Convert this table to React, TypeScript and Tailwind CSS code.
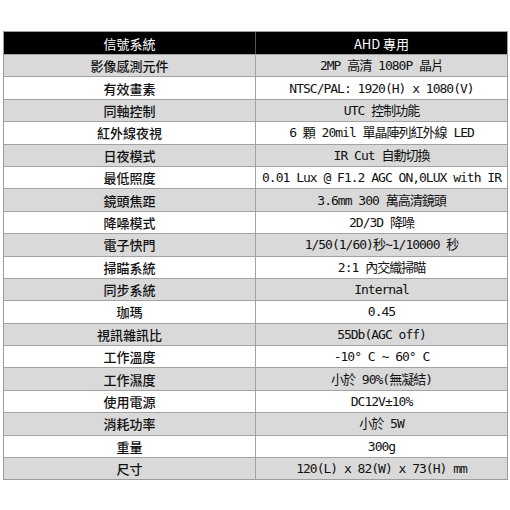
const specs: [string, string][] = [
  ["影像感測元件", "2MP 高清 1080P 晶片"],
  ["有效畫素", "NTSC/PAL: 1920(H) x 1080(V)"],
  ["同軸控制", "UTC 控制功能"],
  ["紅外線夜視", "6 顆 20mil 單晶陣列紅外線 LED"],
  ["日夜模式", "IR Cut 自動切換"],
  ["最低照度", "0.01 Lux @ F1.2 AGC ON,0LUX with IR"],
  ["鏡頭焦距", "3.6mm 300 萬高清鏡頭"],
  ["降噪模式", "2D/3D 降噪"],
  ["電子快門", "1/50(1/60)秒~1/10000 秒"],
  ["掃瞄系統", "2:1 內交織掃瞄"],
  ["同步系統", "Internal"],
  ["珈瑪", "0.45"],
  ["視訊雜訊比", "55Db(AGC off)"],
  ["工作溫度", "-10° C ~ 60° C"],
  ["工作濕度", "小於 90%(無凝結)"],
  ["使用電源", "DC12V±10%"],
  ["消耗功率", "小於 5W"],
  ["重量", "300g"],
  ["尺寸", "120(L) x 82(W) x 73(H) mm"],
];

const labelFont = "font-['Noto_Sans_CJK_TC','Noto_Sans_CJK_SC',sans-serif]";
const valueFont =
  "font-['DejaVu_Sans_Mono','Noto_Sans_CJK_TC',monospace] tracking-[-1px]";

export default function App() {
  return (
    <div className="w-[510px] h-[510px] bg-white pt-[31px] pl-[3px]">
      <div className="w-[505px] border border-[#9d9d9d] text-[13px] leading-none">
        <div className="flex h-[22px] bg-black text-white">
          <div className={`w-[252px] flex items-center justify-center border-r border-[#555] ${labelFont}`}>
            信號系統
          </div>
          <div className={`flex-1 flex items-center justify-center ${labelFont}`}>
            AHD 專用
          </div>
        </div>
        {specs.map(([label, value], i) => (
          <div
            key={label}
            className={`flex h-[22.4px] border-t border-[#a3a3a3] text-[#111] ${
              i % 2 === 0 ? "bg-[#d9d9d9]" : "bg-white"
            }`}
          >
            <div className={`w-[252px] flex items-center justify-center border-r border-[#a3a3a3] font-medium ${labelFont}`}>
              {label}
            </div>
            <div className={`flex-1 flex items-center justify-center whitespace-pre ${valueFont}`}>
              {value}
            </div>
          </div>
        ))}
      </div>
    </div>
  );
}
